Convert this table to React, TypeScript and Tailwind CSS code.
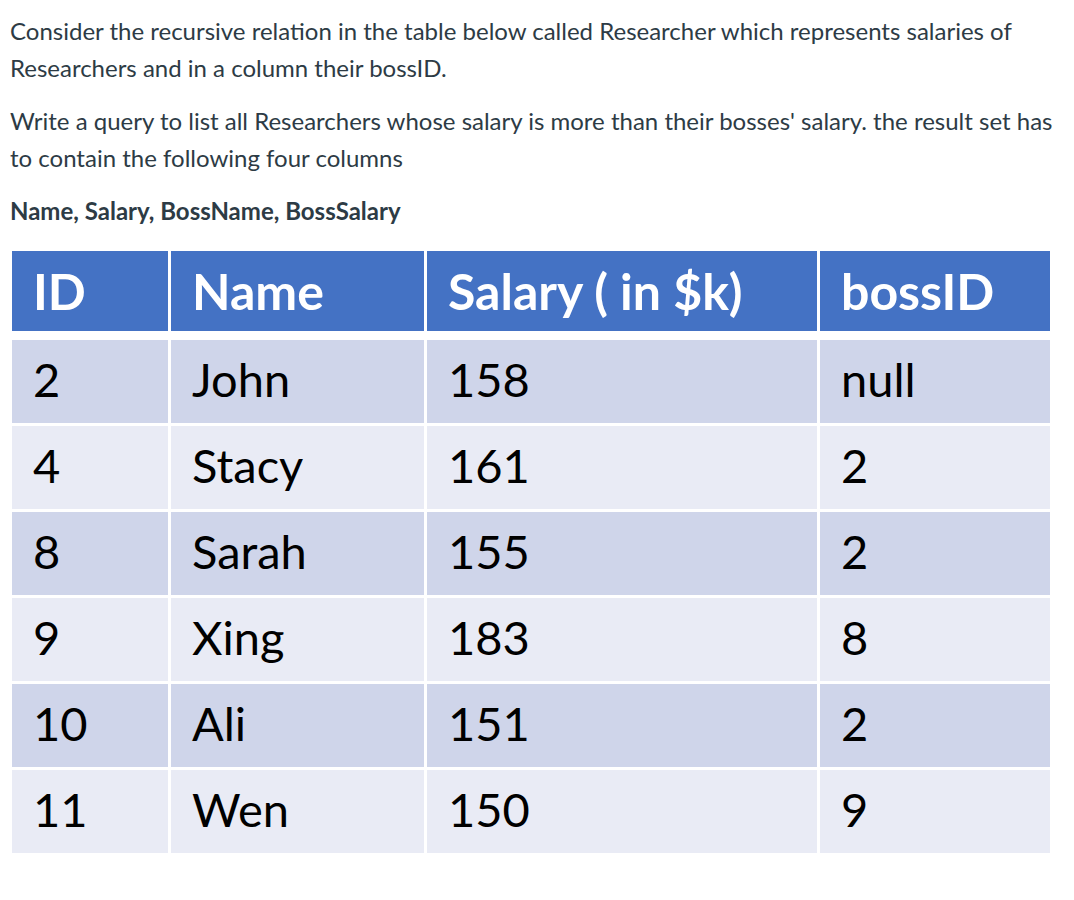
import React from "react";

const rows = [
  ["2", "John", "158", "null"],
  ["4", "Stacy", "161", "2"],
  ["8", "Sarah", "155", "2"],
  ["9", "Xing", "183", "8"],
  ["10", "Ali", "151", "2"],
  ["11", "Wen", "150", "9"],
];

const headers = ["ID", "Name", "Salary ( in $k)", "bossID"];

export default function App() {
  return (
    <div
      className="w-[1074px] h-[900px] bg-white px-[10px] pt-[12px] text-[#2d3b45]"
      style={{ fontFamily: "Lato, 'Noto Sans', sans-serif" }}
    >
      <p className="text-[24px] leading-[37px]">
        Consider the recursive relation in the table below called Researcher which represents salaries of Researchers and in a column their bossID.
      </p>
      <p className="mt-[16px] text-[24px] leading-[37px]">
        Write a query to list all Researchers whose salary is more than their bosses' salary. the result set has to contain the following four columns
      </p>
      <p className="mt-[16px] text-[24px] leading-[37px] font-bold">
        Name, Salary, BossName, BossSalary
      </p>

      <div className="mt-[22px] ml-[2px] flex flex-col text-black">
        <div className="grid grid-cols-[156px_253px_390px_230px] gap-x-[3px]">
          {headers.map((h) => (
            <div
              key={h}
              className="h-[80px] bg-[#4472c4] flex items-center pl-[21px] text-white font-bold text-[50px] leading-none"
            >
              {h}
            </div>
          ))}
        </div>
        <div className="mt-[9px] grid grid-cols-[156px_253px_390px_230px] gap-x-[3px] gap-y-[3.6px]">
          {rows.map((r, i) =>
            r.map((c, j) => (
              <div
                key={`${i}-${j}`}
                className={`h-[82.5px] flex items-center pl-[21px] pb-[4px] text-[47px] leading-none ${
                  i % 2 === 0 ? "bg-[#cfd5ea]" : "bg-[#e9ebf5]"
                }`}
              >
                {c}
              </div>
            ))
          )}
        </div>
      </div>
    </div>
  );
}
